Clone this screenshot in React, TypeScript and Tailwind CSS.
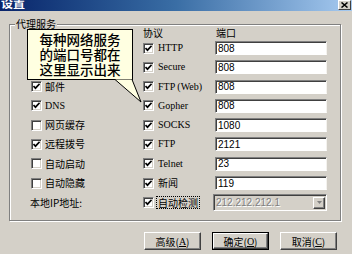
import React from "react";

const CJK = '"Noto Sans CJK SC", "Noto Sans", sans-serif';
const SERIF = '"Liberation Serif", "Noto Sans CJK SC", serif';

function Check({ checked }: { checked: boolean }) {
  return (
    <span className="w-[11px] h-[11px] shrink-0 bg-white border border-t-[#808080] border-l-[#808080] border-b-white border-r-white shadow-[inset_1px_1px_0_#404040,inset_-1px_-1px_0_#d4d0c8] flex items-center justify-center">
      {checked && (
        <svg width="7" height="7" viewBox="0 0 7 7">
          <path d="M0.5 3 L2.5 5.2 L6.6 0.8" stroke="#000" strokeWidth="1.7" fill="none" />
        </svg>
      )}
    </span>
  );
}

function Field({ value }: { value: string }) {
  return (
    <div className="w-[112px] h-[14px] bg-white border border-t-[#808080] border-l-[#808080] border-b-white border-r-[#f4f2ee] shadow-[inset_1px_1px_0_#404040] flex items-center pl-[2px] text-[10px] text-black" style={{ fontFamily: '"Liberation Sans", Arial, sans-serif' }}>
      {value}
    </div>
  );
}

function Btn({ label, k, def }: { label: string; k: string; def?: boolean }) {
  return (
    <div className={"w-[57px] h-[18px] " + (def ? "border border-black" : "")}>
      <div className="w-full h-full bg-[#d4d0c8] border border-t-white border-l-white border-b-[#404040] border-r-[#404040] shadow-[inset_-1px_-1px_0_#808080] flex items-center justify-center text-[10px] text-black" style={{ fontFamily: CJK }}>
        {label}
        <span>(</span>
        <span className="underline" style={{ fontFamily: SERIF }}>{k}</span>
        <span>)</span>
      </div>
    </div>
  );
}

const rows: { left: { label: string; checked: boolean; latin?: boolean } | null; proto: string; latin: boolean; port: string }[] = [
  { left: null, proto: "HTTP", latin: true, port: "808" },
  { left: null, proto: "Secure", latin: true, port: "808" },
  { left: { label: "邮件", checked: true }, proto: "FTP (Web)", latin: true, port: "808" },
  { left: { label: "DNS", checked: true, latin: true }, proto: "Gopher", latin: true, port: "808" },
  { left: { label: "网页缓存", checked: false }, proto: "SOCKS", latin: true, port: "1080" },
  { left: { label: "远程拨号", checked: true }, proto: "FTP", latin: true, port: "2121" },
  { left: { label: "自动启动", checked: false }, proto: "Telnet", latin: true, port: "23" },
  { left: { label: "自动隐藏", checked: false }, proto: "新闻", latin: false, port: "119" },
];

export default function App() {
  return (
    <div className="w-[352px] h-[254px] bg-[#d4d0c8] relative overflow-hidden text-black" style={{ fontFamily: CJK }}>
      {/* title bar */}
      <div className="h-[11px] bg-gradient-to-r from-[#0a246a] via-[#3a6ea5] to-[#a6caf0] flex items-start justify-between overflow-hidden">
        <span className="text-white font-bold text-[12px] leading-[12px] -mt-[3px] ml-[1px]">设置</span>
        <div className="w-[13px] h-[10px] mr-[1px] bg-[#d4d0c8] border border-t-white border-l-white border-b-[#404040] border-r-[#404040] flex items-center justify-center">
          <svg width="7" height="6" viewBox="0 0 7 6">
            <path d="M0.5 0.5 L6.5 5.5 M6.5 0.5 L0.5 5.5" stroke="#000" strokeWidth="1.5" />
          </svg>
        </div>
      </div>

      {/* group box */}
      <div className="ml-[9px] mt-[13px] w-[332px] h-[197px] border border-[#808080] shadow-[1px_1px_0_#ffffff,inset_1px_1px_0_#ffffff] relative">
        <span className="absolute left-[5px] -top-[7px] px-[1px] bg-[#d4d0c8] text-[10px] leading-[12px]">代理服务</span>
        <div className="pt-[2px] pl-[21px] flex flex-col">
          <div className="h-[12px] flex text-[10px] leading-[12px]">
            <div className="w-[112px]" />
            <div className="w-[72px]">协议</div>
            <div className="w-[112px] pl-[1px]">端口</div>
          </div>
          <div className="mt-[2px] flex flex-col gap-[5.3px]">
            {rows.map((r, i) => (
              <div key={i} className="h-[14px] flex items-center">
                <div className="w-[112px] flex items-center gap-[3px]">
                  {r.left && (
                    <>
                      <Check checked={r.left.checked} />
                      <span className="text-[10px] leading-[12px]" style={{ fontFamily: r.left.latin ? SERIF : CJK }}>{r.left.label}</span>
                    </>
                  )}
                </div>
                <div className="w-[72px] flex items-center gap-[4px]">
                  <Check checked={true} />
                  <span className="text-[10px] leading-[12px] whitespace-nowrap" style={{ fontFamily: r.latin ? SERIF : CJK }}>{r.proto}</span>
                </div>
                <Field value={r.port} />
              </div>
            ))}
          </div>
          <div className="mt-[4px] h-[17px] flex items-center">
            <div className="w-[112px] -ml-[1px] text-[10px] leading-[12px]">本地IP地址:</div>
            <div className="w-[70px] ml-[1px] flex items-center gap-[3px]">
              <Check checked={true} />
              <span className="text-[10px] leading-[11px] px-[1px] outline outline-1 outline-dotted outline-[#000]">自动检测</span>
            </div>
            <div className="w-[114px] h-[17px] bg-[#d4d0c8] border border-t-[#808080] border-l-[#808080] border-b-white border-r-white shadow-[inset_1px_1px_0_#404040] flex items-center justify-between pl-[2px] pr-[1px]">
              <span className="text-[10px] text-[#808080] [text-shadow:1px_1px_0_#ffffff]" style={{ fontFamily: '"Liberation Sans", Arial, sans-serif' }}>212.212.212.1</span>
              <div className="w-[12px] h-[12px] bg-[#d4d0c8] border border-t-white border-l-white border-b-[#404040] border-r-[#404040] shadow-[inset_-1px_-1px_0_#808080] flex items-center justify-center">
                <svg width="5" height="3" viewBox="0 0 5 3">
                  <path d="M0 0 H5 L2.5 3 Z" fill="#808080" />
                </svg>
              </div>
            </div>
          </div>
        </div>
      </div>

      {/* buttons */}
      <div className="mt-[11px] ml-[144px] flex gap-[11px]">
        <Btn label="高级" k="A" />
        <Btn label="确定" k="O" def />
        <Btn label="取消" k="C" />
      </div>

      {/* callout */}
      <div className="absolute left-[27px] top-[29px] w-[106px] h-[51px] pt-[3px] bg-[#ffffe1] border border-black flex flex-col items-center text-[13.5px] leading-[13.5px] font-medium">
        <span className="h-[15px]">每种网络服务</span>
        <span className="h-[15px]">的端口号都在</span>
        <span className="h-[15px]">这里显示出来</span>
      </div>
      <svg className="absolute left-0 top-0" width="352" height="254" style={{ pointerEvents: "none" }}>
        <polygon points="115,79.5 141,102 132,79.5" fill="#ffffe1" />
        <path d="M115 79.5 L141 102 L132 79.5" stroke="#000" strokeWidth="1" fill="none" />
      </svg>
    </div>
  );
}
